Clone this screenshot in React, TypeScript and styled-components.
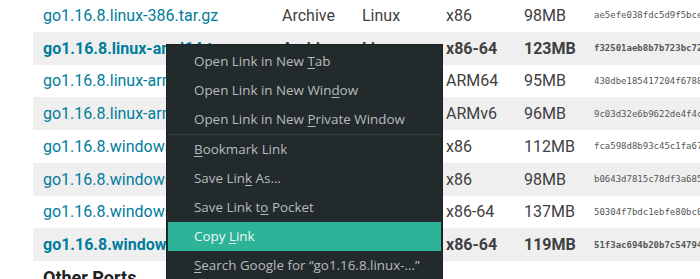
import React from "react";
import styled, { createGlobalStyle } from "styled-components";

const GlobalStyle = createGlobalStyle`
  html, body {
    margin: 0;
    padding: 0;
    background: #ffffff;
    overflow: hidden;
  }
`;

type FileRow = {
  name: string;
  kind: string;
  os: string;
  arch: string;
  size: string;
  hash: string;
  featured?: boolean;
};

const rows: FileRow[] = [
  { name: "go1.16.8.linux-386.tar.gz", kind: "Archive", os: "Linux", arch: "x86", size: "98MB", hash: "ae5efe038fdc5d9f5bce2c2d5d1b9c3f8e2c0a7d1d0e2f" },
  { name: "go1.16.8.linux-amd64.tar.gz", kind: "Archive", os: "Linux", arch: "x86-64", size: "123MB", hash: "f32501aeb8b7b723bc7215f6c373abb6981bbc7e1c7b44", featured: true },
  { name: "go1.16.8.linux-arm64.tar.gz", kind: "Archive", os: "Linux", arch: "ARM64", size: "95MB", hash: "430dbe185417204f6788b7a0d3c4e8d1a2b6f1c0e93a" },
  { name: "go1.16.8.linux-armv6l.tar.gz", kind: "Archive", os: "Linux", arch: "ARMv6", size: "96MB", hash: "9c03d32e6b9622de4f4c8b17e2a0d6c3f95b1e7a4d20" },
  { name: "go1.16.8.windows-386.msi", kind: "Installer", os: "Windows", arch: "x86", size: "112MB", hash: "fca598d8b93c45c1fa67a4c0e5d21b9f3e08d7c6a1b4" },
  { name: "go1.16.8.windows-386.zip", kind: "Archive", os: "Windows", arch: "x86", size: "98MB", hash: "b0643d7815c78df3a6857d0e1c4f2a9b8e3d6c5f7a21" },
  { name: "go1.16.8.windows-amd64.zip", kind: "Archive", os: "Windows", arch: "x86-64", size: "137MB", hash: "50304f7bdc1ebfe80bc0a5e3d8c27f1b4e96d2a0c3f5" },
  { name: "go1.16.8.windows-amd64.msi", kind: "Installer", os: "Windows", arch: "x86-64", size: "119MB", hash: "51f3ac694b20b7c5479410d8e2a6c3f7b1e95d4a0c28", featured: true },
];

type MenuEntry = { before: string; key: string; after: string; active?: boolean; divider?: boolean };

const menu: MenuEntry[] = [
  { before: "Open Link in New ", key: "T", after: "ab" },
  { before: "Open Link in New Win", key: "d", after: "ow" },
  { before: "Open Link in New ", key: "P", after: "rivate Window" },
  { before: "", key: "B", after: "ookmark Link", divider: true },
  { before: "Save Lin", key: "k", after: " As…" },
  { before: "Save Link t", key: "o", after: " Pocket" },
  { before: "Copy ", key: "L", after: "ink", active: true },
  { before: "", key: "S", after: "earch Google for “go1.16.8.linux-…”" },
];

export default function App() {
  return (
    <Page>
      <GlobalStyle />
      <Table>
        {rows.map((r, i) => (
          <Row key={r.name} $striped={i % 2 === 1} $bold={!!r.featured}>
            <NameCell>{r.name}</NameCell>
            <Cell>{r.kind}</Cell>
            <Cell>{r.os}</Cell>
            <Cell>{r.arch}</Cell>
            <Cell>{r.size}</Cell>
            <HashCell>{r.hash}</HashCell>
          </Row>
        ))}
        <SectionTitle>Other Ports</SectionTitle>
      </Table>

      <ContextMenu>
        {menu.map((m) => (
          <React.Fragment key={m.before + m.key + m.after}>
            {m.divider && <Divider />}
            <MenuItem $active={!!m.active}>
              {m.before}
              <u>{m.key}</u>
              {m.after}
            </MenuItem>
          </React.Fragment>
        ))}
      </ContextMenu>
    </Page>
  );
}

const Page = styled.div`
  position: relative;
  width: 700px;
  height: 279px;
  overflow: hidden;
  background: #fff;
`;

const Table = styled.div`
  display: flex;
  flex-direction: column;
  margin-top: -1px;
  padding-left: 33px;
  font-family: Roboto, "Liberation Sans", sans-serif;
  font-size: 16px;
  color: #3e4042;
`;

const Row = styled.div<{ $striped: boolean; $bold: boolean }>`
  display: grid;
  grid-template-columns: 239px 80px 84px 78px 70px 1fr;
  align-items: center;
  height: 32.75px;
  background: ${(p) => (p.$striped ? "#efefef" : "transparent")};
  font-weight: ${(p) => (p.$bold ? 700 : 400)};
  white-space: nowrap;
`;

const Cell = styled.div`
  padding-left: 10px;
  overflow: visible;
`;

const NameCell = styled(Cell)`
  color: #007d9c;
`;

const HashCell = styled(Cell)`
  font-family: "DejaVu Sans Mono", "Liberation Mono", monospace;
  font-size: 9px;
  color: #555759;
  overflow: hidden;
`;

const SectionTitle = styled.h3`
  margin: 6px 0 0 10px;
  font-size: 18px;
  font-weight: 700;
  color: #202224;
`;

const ContextMenu = styled.div`
  position: absolute;
  left: 166px;
  top: 44px;
  width: 273px;
  padding: 2px 1px;
  background: #232a2c;
  border: 1px solid #1b2022;
  font-family: "Open Sans", "Noto Sans", sans-serif;
  font-size: 13.4px;
  display: flex;
  flex-direction: column;
`;

const MenuItem = styled.div<{ $active: boolean }>`
  height: 29px;
  line-height: 29px;
  padding-left: 26px;
  white-space: nowrap;
  color: ${(p) => (p.$active ? "#f2f6f6" : "#b5bcbe")};
  background: ${(p) => (p.$active ? "#2db398" : "transparent")};

  u {
    text-underline-offset: 2px;
  }
`;

const Divider = styled.div`
  height: 1px;
  background: #353d40;
`;
